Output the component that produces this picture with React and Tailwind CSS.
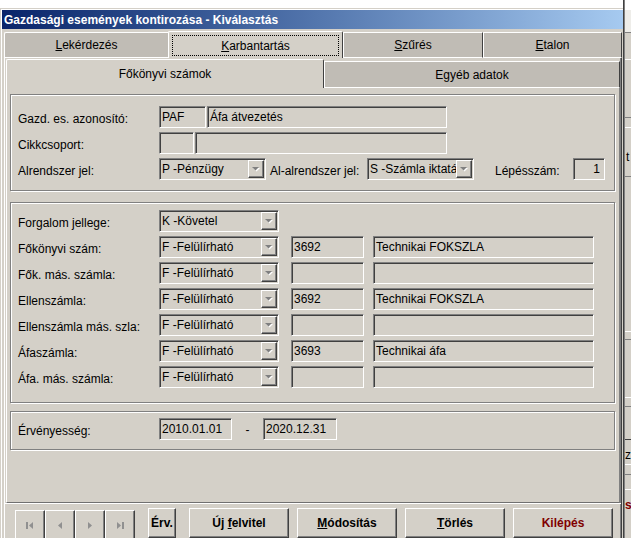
import React from 'react';

// klasszikus 3D keretek
const sunk = 'border border-t-[#808080] border-l-[#808080] border-r-white border-b-white shadow-[inset_1px_1px_0_#404040]';
const raised = 'border border-t-white border-l-white border-r-[#404040] border-b-[#404040] shadow-[inset_-1px_-1px_0_#808080]';
const etched = 'border border-[#808080] shadow-[1px_1px_0_#ffffff,inset_1px_1px_0_#ffffff]';

function Box({ w, children, right }) {
  return (
    <div className={`h-[22px] ${w} ${sunk} flex items-center px-[2px] whitespace-nowrap overflow-hidden leading-[14px] ${right ? 'justify-end pr-[4px]' : ''}`}>
      {children}
    </div>
  );
}

function DropBtn() {
  return (
    <div className={`h-[18px] w-[16px] mr-[1px] shrink-0 bg-[#d4d0c8] ${raised} flex items-center justify-center`}>
      <svg width="8" height="5" viewBox="0 0 8 5">
        <polygon points="1,1 8,1 4.5,4.5" fill="#ffffff" />
        <polygon points="0,0 7,0 3.5,3.5" fill="#808080" />
      </svg>
    </div>
  );
}

function Combo({ w, text }) {
  return (
    <div className={`h-[22px] ${w} ${sunk} flex items-center`}>
      <span className="flex-1 pl-[2px] whitespace-nowrap overflow-hidden leading-[14px]">{text}</span>
      <DropBtn />
    </div>
  );
}

function Label({ w, children }) {
  return <div className={`${w} shrink-0 self-start pt-[6px] leading-[14px] whitespace-nowrap`}>{children}</div>;
}

function Row({ children }) {
  return <div className="flex h-[22px]">{children}</div>;
}

function NavBtn({ kind }) {
  return (
    <div className={`w-[30px] h-[30px] bg-[#d4d0c8] ${raised} flex items-center justify-center`}>
      <svg width="10" height="9" viewBox="0 0 10 9" fill="#909090">
        {kind === 'first' && (
          <>
            <rect x="1" y="1" width="2" height="7" />
            <polygon points="8,1 8,8 4,4.5" />
          </>
        )}
        {kind === 'prev' && <polygon points="7,1 7,8 3,4.5" />}
        {kind === 'next' && <polygon points="3,1 3,8 7,4.5" />}
        {kind === 'last' && (
          <>
            <polygon points="2,1 2,8 6,4.5" />
            <rect x="7" y="1" width="2" height="7" />
          </>
        )}
      </svg>
    </div>
  );
}

function Btn({ w, children, className = '' }) {
  return (
    <div className={`${w} h-[30px] bg-[#d4d0c8] ${raised} flex items-center justify-center font-bold whitespace-nowrap ${className}`}>
      <span>{children}</span>
    </div>
  );
}

export default function App() {
  const g2 = [
    { label: 'Főkönyvi szám:', num: '3692', name: 'Technikai FOKSZLA' },
    { label: 'Fők. más. számla:', num: '', name: '' },
    { label: 'Ellenszámla:', num: '3692', name: 'Technikai FOKSZLA' },
    { label: 'Ellenszámla más. szla:', num: '', name: '' },
    { label: 'Áfaszámla:', num: '3693', name: 'Technikai áfa' },
    { label: 'Áfa. más. számla:', num: '', name: '' },
  ];

  return (
    <div className="w-[631px] h-[538px] flex bg-white overflow-hidden text-[12px] text-black font-['Liberation_Sans',Arial,sans-serif]">
      {/* ablak */}
      <div className="w-[623px] flex flex-col shrink-0">
        <div className="h-[8px] bg-white shrink-0" />
        <div className="flex-1 border-t border-l border-[#d4d0c8] bg-[#d4d0c8]">
          <div className="h-full border-t border-l border-white flex flex-col">
            <div className="h-[19px] shrink-0 flex items-center pl-[2px] bg-gradient-to-r from-[#0a246a] to-[#a6caf0] text-white font-bold text-[12px] whitespace-nowrap">
              Gazdasági események kontirozása - Kiválasztás
            </div>

            <div className="ml-[2px] w-[618px] flex flex-col flex-1">
              {/* külső fülek */}
              <div className="h-[29px] flex items-end shrink-0">
                <div className="w-[164px] h-[26px] bg-[#c0bcb5] border-t border-l border-b border-white rounded-tl-[2px] flex items-center justify-center">
                  <span><u>L</u>ekérdezés</span>
                </div>
                <div className="w-[175px] h-[27px] bg-[#d4d0c8] border-t border-l border-r border-t-white border-l-white border-r-[#404040] rounded-t-[2px] p-[3px] pb-[2px]">
                  <div className="h-full border border-dotted border-black flex items-center justify-center">
                    <span><u>K</u>arbantartás</span>
                  </div>
                </div>
                <div className="w-[140px] h-[26px] bg-[#c0bcb5] border-t border-l border-r border-b border-t-white border-l-white border-b-white border-r-[#404040] flex items-center justify-center">
                  <span><u>S</u>zűrés</span>
                </div>
                <div className="w-[139px] h-[26px] bg-[#c0bcb5] border-t border-l border-r border-b border-t-white border-l-white border-b-white border-r-[#404040] flex items-center justify-center">
                  <span><u>E</u>talon</span>
                </div>
              </div>

              {/* külső lap */}
              <div className="flex-1 border-l border-r border-l-white border-r-[#404040] shadow-[inset_-1px_0_0_#808080] flex flex-col">
                <div className="ml-[1px] w-[614px] flex flex-col">
                  <div className="h-[30px] flex items-end">
                    <div className="w-[318px] h-[29px] bg-[#d4d0c8] border-t border-l border-r border-t-white border-l-white border-r-[#404040] rounded-t-[2px] flex items-center justify-center">
                      Főkönyvi számok
                    </div>
                    <div className="w-[296px] h-[27px] bg-[#c0bcb5] border-t border-l border-r border-b border-t-white border-l-white border-b-white border-r-[#404040] flex items-center justify-center">
                      Egyéb adatok
                    </div>
                  </div>

                  {/* belső lap */}
                  <div className="h-[415px] border-l border-r border-b border-l-white border-r-[#808080] border-b-[#707070] pt-[6px] pl-[3px]">
                    <div className={`w-[605px] h-[97px] ${etched} pt-[11px] pl-[7px] flex flex-col gap-[4px]`}>
                      <Row>
                        <Label w="w-[141px]">Gazd. es. azonosító:</Label>
                        <Box w="w-[47px]">PAF</Box>
                        <div className="ml-[1px]">
                          <Box w="w-[240px]">Áfa átvezetés</Box>
                        </div>
                      </Row>
                      <Row>
                        <Label w="w-[141px]">Cikkcsoport:</Label>
                        <Box w="w-[35px]" />
                        <div className="ml-[1px]">
                          <Box w="w-[252px]" />
                        </div>
                      </Row>
                      <Row>
                        <Label w="w-[141px]">Alrendszer jel:</Label>
                        <Combo w="w-[107px]" text="P -Pénzügy" />
                        <div className="ml-[4px]">
                          <Label w="w-[97px]">Al-alrendszer jel:</Label>
                        </div>
                        <Combo w="w-[107px]" text="S -Számla iktatás" />
                        <div className="ml-[21px]">
                          <Label w="w-[78px]">Lépésszám:</Label>
                        </div>
                        <Box w="w-[32px]" right>1</Box>
                      </Row>
                    </div>

                    <div className={`mt-[11px] w-[605px] h-[201px] ${etched} pt-[7px] pl-[7px] flex flex-col gap-[4px]`}>
                      <Row>
                        <Label w="w-[141px]">Forgalom jellege:</Label>
                        <Combo w="w-[120px]" text="K -Követel" />
                      </Row>
                      {g2.map((r) => (
                        <Row key={r.label}>
                          <Label w="w-[141px]">{r.label}</Label>
                          <Combo w="w-[120px]" text="F -Felülírható" />
                          <div className="ml-[12px]">
                            <Box w="w-[73px]">{r.num}</Box>
                          </div>
                          <div className="ml-[9px]">
                            <Box w="w-[221px]">{r.name}</Box>
                          </div>
                        </Row>
                      ))}
                    </div>

                    <div className={`mt-[8px] w-[605px] h-[39px] ${etched} pt-[6px] pl-[7px]`}>
                      <Row>
                        <Label w="w-[141px]">Érvényesség:</Label>
                        <Box w="w-[73px]">2010.01.01</Box>
                        <div className="w-[31px] self-start pt-[5px] leading-[14px] text-center">-</div>
                        <Box w="w-[74px]">2020.12.31</Box>
                      </Row>
                    </div>
                  </div>
                </div>

                {/* gombsor */}
                <div className="border-t border-white pt-[4px] pl-[10px] flex items-start">
                  <div className="flex mt-[2px]">
                    <NavBtn kind="first" />
                    <NavBtn kind="prev" />
                    <NavBtn kind="next" />
                    <NavBtn kind="last" />
                  </div>
                  <div className="ml-[13px]">
                    <Btn w="w-[28px]">Érv.</Btn>
                  </div>
                  <div className="ml-[13px] flex gap-[8px]">
                    <Btn w="w-[100px]">Új <u>f</u>elvitel</Btn>
                    <Btn w="w-[100px]"><u>M</u>ódosítás</Btn>
                    <Btn w="w-[100px]"><u>T</u>örlés</Btn>
                    <Btn w="w-[100px]" className="text-[#800000]">Kilépés</Btn>
                  </div>
                </div>
              </div>
            </div>
          </div>
        </div>
      </div>

      {/* ablak jobb széle */}
      <div className="w-[1px] bg-[#404040] shrink-0" />
      <div className="w-[1px] bg-[#808080] shrink-0" />

      {/* háttérben lévő ablak széle */}
      <div className="w-[6px] shrink-0 flex flex-col bg-[#d4d0c8] overflow-hidden leading-[14px]">
        <div className="h-[10px] bg-white shrink-0" />
        <div className="h-[23px] bg-[#eeede9] border-b border-[#808080] shrink-0" />
        <div className="h-[27px] border-b border-white shrink-0" />
        <div className="h-[58px] border-b border-[#808080] shrink-0" />
        <div className="h-[10px] border-b border-white shrink-0" />
        <div className="h-[49px] border-b border-[#808080] pt-[22px] pl-[1px] shrink-0">t</div>
        <div className="h-[155px] border-b border-white shrink-0" />
        <div className="h-[8px] border-b border-[#808080] shrink-0" />
        <div className="h-[58px] border-b border-white shrink-0" />
        <div className="h-[9px] border-b border-[#808080] shrink-0" />
        <div className="h-[33px] border-b border-[#404040] shrink-0" />
        <div className="h-[25px] border-b border-white pt-[8px] shrink-0">z</div>
        <div className="h-[10px] border-b border-[#808080] shrink-0" />
        <div className="h-[15px] border-b border-white shrink-0" />
        <div className="pt-[8px] text-[#800000] font-bold shrink-0">s</div>
      </div>
    </div>
  );
}
